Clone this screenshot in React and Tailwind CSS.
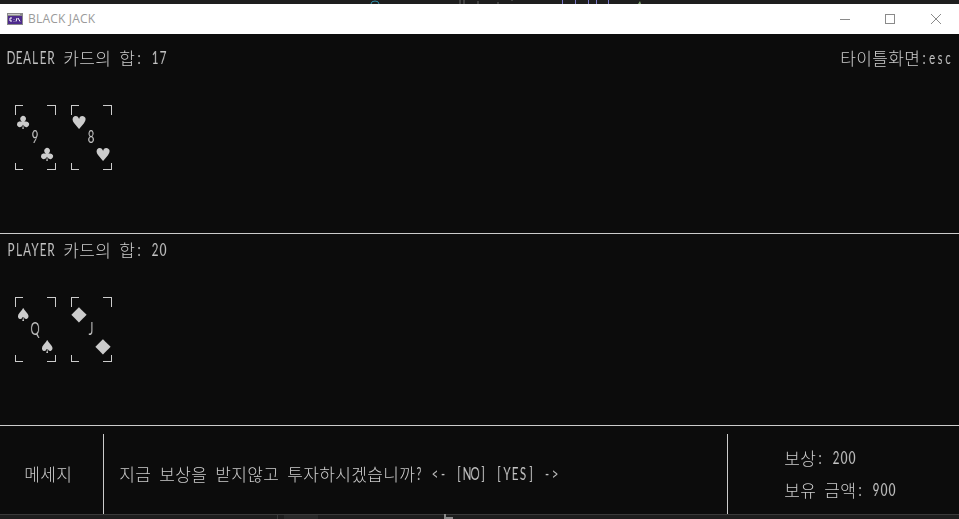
import { useMemo } from "react";

// console text: every ascii char takes one 8px cell, every hangul char two
function Console({ text }) {
  const cells = useMemo(() => Array.from(text), [text]);
  return (
    <span className="inline-flex h-4 items-center leading-4">
      {cells.map((ch, i) =>
        ch.charCodeAt(0) > 255 ? (
          <span key={i} className="flex w-4 justify-center text-[17px] font-light [font-family:'Noto_Sans_CJK_KR',sans-serif] [will-change:transform]">
            {ch}
          </span>
        ) : (
          <span key={i} className="flex w-2 scale-x-[.7] justify-center text-[16.5px] font-normal whitespace-pre text-[#c4c4c4] [font-family:'Lato',sans-serif] [will-change:transform]">
            {ch}
          </span>
        )
      )}
    </span>
  );
}

function Card({ suit, value, big }) {
  const suitClass = big
    ? "h-4 w-4 text-center text-[20px] leading-4 [font-family:'DejaVu_Sans',sans-serif] [will-change:transform]"
    : "h-4 w-4 pt-[2px] text-center text-[18px] leading-4 [font-family:'DejaVu_Sans',sans-serif] [will-change:transform]";
  return (
    <div className="flex w-[41px] flex-col">
      <div className="flex h-2 justify-between">
        <div className="h-[10px] w-2 border-t border-l border-[#cccccc]" />
        <div className="h-[10px] w-[9px] border-t border-r border-[#cccccc]" />
      </div>
      <div className={suitClass}>{suit}</div>
      <div className="flex h-4 pl-4">
        <Console text={value} />
      </div>
      <div className="flex h-4 justify-end pr-[1px]">
        <div className={suitClass}>{suit}</div>
      </div>
      <div className="flex h-[9px] items-end justify-between">
        <div className="h-[7px] w-2 border-b border-l border-[#cccccc]" />
        <div className="h-[7px] w-[9px] border-b border-r border-[#cccccc]" />
      </div>
    </div>
  );
}

function Hand({ title, cards, right }) {
  return (
    <section className="h-[192px] border-b border-[#cccccc] pt-2 pl-[7px]">
      <div className="flex justify-between pr-[7px]">
        <Console text={title} />
        {right && <Console text={right} />}
      </div>
      <div className="mt-[39px] flex gap-[15px] pl-2">
        {cards.map((c) => (
          <Card key={c.suit + c.value} {...c} />
        ))}
      </div>
    </section>
  );
}

export default function App() {
  return (
    <div className="flex h-[519px] w-[959px] flex-col overflow-hidden bg-[#0c0c0c] text-[#cccccc]">
      {/* whatever window sits behind */}
      <svg width="959" height="4" viewBox="0 0 959 4" className="block shrink-0 bg-[#1e1e1e]">
        <path d="M371 4a4 3 0 0 1 8 0" stroke="#2f8fa8" fill="none" />
        <path d="M460 0v4M464 0v4M478 1v3M498 2v2M512 0v1" stroke="#666" />
        <path d="M562.5 0v4M575.5 0v4M588.5 0v4M596.5 0v4M608.5 0v4" stroke="#7a78c8" />
        <path d="M638 4l2-3 1 3z" fill="#7f9f6f" />
      </svg>

      {/* title bar */}
      <header className="flex h-[30px] shrink-0 items-center bg-white pl-[7px]">
        <svg width="16" height="12" viewBox="0 0 16 12" className="mr-[5px]">
          <rect width="16" height="12" fill="#8a8a8a" />
          <rect x="1" y="3" width="14" height="8" fill="#4d2a8c" />
          <rect x="1" y="1" width="12" height="1" fill="#c8c8c8" />
          <path d="M3 5h2M3 5v3M3 8h2M7 6v.5M7 8v.5M9 8.5l1-3.5M11 5l2 3.5" stroke="#fff" strokeWidth="1" fill="none" />
        </svg>
        <span className="text-[12px] tracking-[.2px] text-[#9a9a9a] [font-family:'Open_Sans',sans-serif]">BLACK JACK</span>
        <div className="ml-auto flex items-center">
          <div className="mr-[35px] h-px w-[10px] bg-[#8a8a8a]" />
          <div className="mr-[36px] h-[10px] w-[10px] border border-[#8a8a8a]" />
          <svg width="10" height="10" viewBox="0 0 10 10" className="mr-[18px]">
            <path d="M0 0l10 10M10 0L0 10" stroke="#8a8a8a" strokeWidth="1" />
          </svg>
        </div>
      </header>

      <div className="h-[8px] shrink-0" />
      <Hand
        title="DEALER 카드의 합: 17"
        right="타이틀화면:esc"
        cards={[
          { suit: "♣", value: "9" },
          { suit: "♥", value: "8" },
        ]}
      />
      <Hand
        title="PLAYER 카드의 합: 20"
        cards={[
          { suit: "♠", value: "Q" },
          { suit: "◆", value: "J", big: true },
        ]}
      />

      {/* message bar */}
      <div className="flex min-h-0 flex-1 flex-col pt-2">
        <div className="flex flex-1">
          <div className="flex w-[103px] items-center pl-6">
            <Console text="메세지" />
          </div>
          <div className="w-px bg-[#cccccc]" />
          <div className="flex w-[623px] items-center pl-[15px]">
            <Console text="지금 보상을 받지않고 투자하시겠습니까? <- [NO] [YES] ->" />
          </div>
          <div className="w-px bg-[#cccccc]" />
          <div className="flex flex-col gap-4 pt-4 pl-[56px]">
            <Console text="보상: 200" />
            <Console text="보유 금액: 900" />
          </div>
        </div>
        <svg width="959" height="5" viewBox="0 0 959 5" className="block shrink-0 bg-[#1e1e1e]">
          <path d="M0 .5h959" stroke="#3a3a3a" />
          <rect x="284" y="1" width="34" height="4" fill="#2a2a2a" />
          <path d="M277.5 1v4" stroke="#3a3a3a" />
          <path d="M444 0h2v3h7v2h-9z" fill="#8a8a8a" />
        </svg>
      </div>
    </div>
  );
}
